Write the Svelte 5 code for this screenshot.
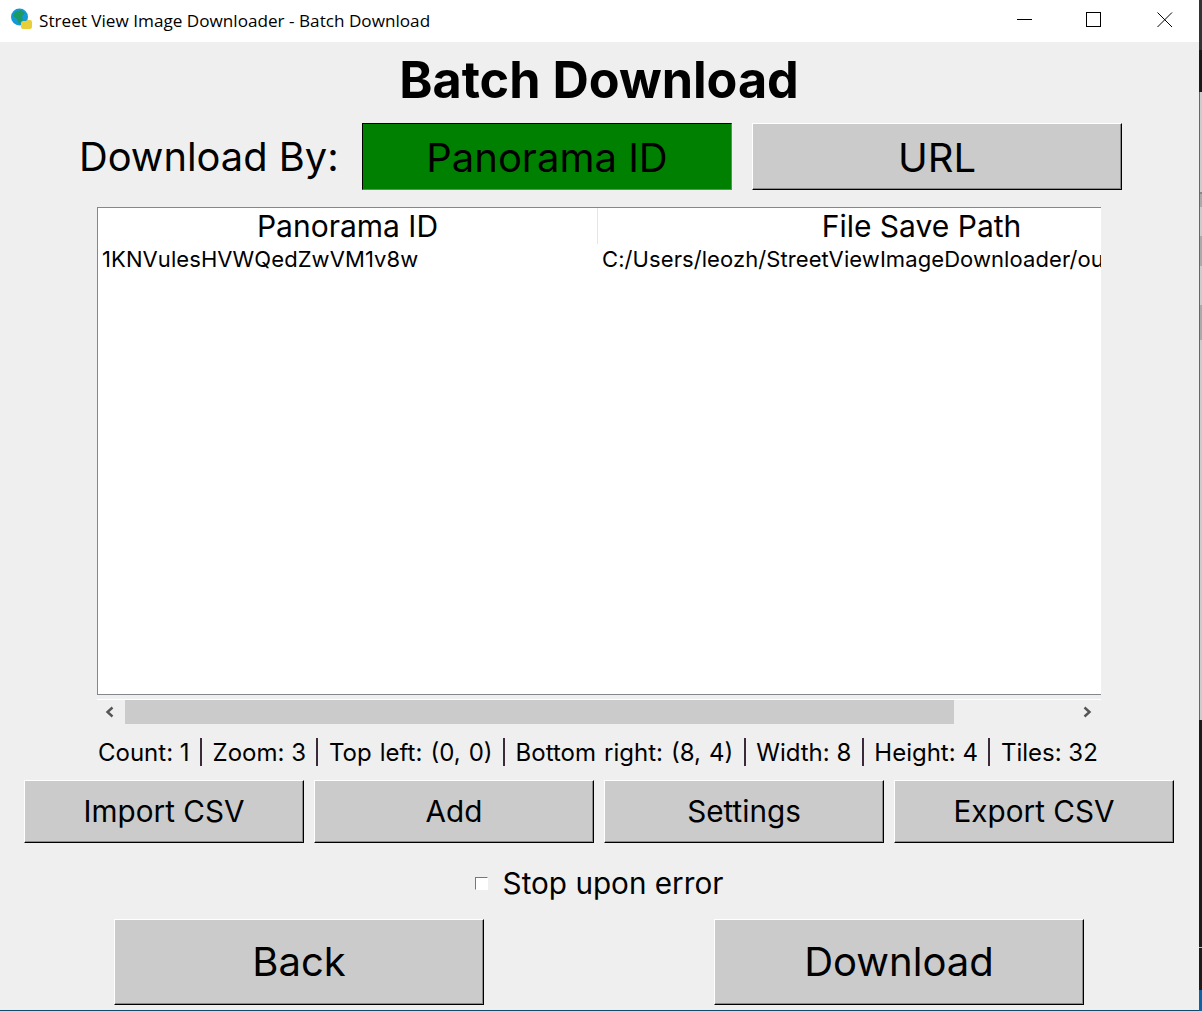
<script>
  let downloadBy = $state('id');
  let stopOnError = $state(false);

  const stats = [
    'Count: 1',
    'Zoom: 3',
    'Top left: (0, 0)',
    'Bottom right: (8, 4)',
    'Width: 8',
    'Height: 4',
    'Tiles: 32'
  ];
  const actions = ['Import CSV', 'Add', 'Settings', 'Export CSV'];
</script>

<div class="desktop">
  <div class="window">
    <header class="titlebar">
      <svg class="app-icon" width="24" height="24" viewBox="0 0 24 24">
        <circle cx="9.5" cy="9" r="8.5" fill="#1398d8" />
        <path d="M5 4 L11 2 L15 5 L12 8 L13 12 L9 16 L7 11 L3 8 Z" fill="#1c9a62" />
        <path d="M11 15 Q11 13 13 13 L16 13 L17 12 L20 12 Q22 12 22 14 L22 19 Q22 21 20 21 L13 21 Q11 21 11 19 Z" fill="#e8cf3a" />
      </svg>
      <span class="window-title">Street View Image Downloader - Batch Download</span>
      <div class="window-controls">
        <svg width="16" height="16" viewBox="0 0 16 16"><path d="M0 7.5 H15" stroke="#000" fill="none" /></svg>
        <svg width="16" height="16" viewBox="0 0 16 16"><rect x="0.5" y="0.5" width="14" height="14" stroke="#000" fill="none" /></svg>
        <svg class="close" width="16" height="16" viewBox="0 0 16 16"><path d="M0.5 0.5 L15 15 M15 0.5 L0.5 15" stroke="#000" fill="none" /></svg>
      </div>
    </header>

    <main class="content">
      <h1>Batch Download</h1>

      <div class="mode-row">
        <span class="mode-label">Download By:</span>
        <button class="btn mode" class:selected={downloadBy === 'id'} onclick={() => (downloadBy = 'id')}>Panorama ID</button>
        <button class="btn mode" class:selected={downloadBy === 'url'} onclick={() => (downloadBy = 'url')}>URL</button>
      </div>

      <div class="table">
        <div class="table-head">
          <div class="col-id head-cell">Panorama ID</div>
          <div class="col-path head-cell">File Save Path</div>
        </div>
        <div class="table-row">
          <div class="col-id">1KNVulesHVWQedZwVM1v8w</div>
          <div class="col-path">C:/Users/leozh/StreetViewImageDownloader/output/1KNVulesHVWQedZwVM1v8w.jpg</div>
        </div>
      </div>

      <div class="scrollbar">
        <svg width="12" height="12" viewBox="0 0 12 12"><path d="M8.5 1.5 L3.5 6 L8.5 10.5" stroke="#555" stroke-width="2.4" fill="none" /></svg>
        <div class="track"><div class="thumb"></div></div>
        <svg width="12" height="12" viewBox="0 0 12 12"><path d="M3.5 1.5 L8.5 6 L3.5 10.5" stroke="#555" stroke-width="2.4" fill="none" /></svg>
      </div>

      <div class="stats">
        {#each stats as stat, i}
          {#if i > 0}<span class="sep"></span>{/if}
          <span class:coords={stat.includes('(')}>{stat}</span>
        {/each}
      </div>

      <div class="actions">
        {#each actions as action}
          <button class="btn action">{action}</button>
        {/each}
      </div>

      <label class="stop-check">
        <input type="checkbox" bind:checked={stopOnError} />
        <span>Stop upon error</span>
      </label>

      <div class="footer-buttons">
        <button class="btn big">Back</button>
        <button class="btn big">Download</button>
      </div>
    </main>
  </div>
  <div class="edge"></div>
</div>

<style>
  :global(body) {
    margin: 0;
    background: #efefef;
  }
  .desktop {
    display: flex;
    width: 1202px;
    height: 1011px;
    overflow: hidden;
    font-family: Inter, "Liberation Sans", sans-serif;
    color: #000;
  }
  .window {
    width: 1199px;
    box-sizing: border-box;
    display: flex;
    flex-direction: column;
    background: #efefef;
    border-bottom: 1px solid #0f4a6e;
  }
  .edge {
    flex: 1;
    background:
      linear-gradient(#666, #666) 0 92px / 1px 628px no-repeat,
      linear-gradient(#333 0 50px, #1a1a1a 50px 92px, #ccc 92px 192px, #888 192px 194px, #aaa 194px 207px, #ccc 207px 236px, #aaa 236px 266px, #ccc 266px 305px, #aaa 305px 340px, #ccc 340px 720px, #1c1c1c 720px 947px, #bbb 947px 948px, #1c1c1c 948px 990px, #0a62a8 990px);
  }
  .titlebar {
    height: 42px;
    flex: none;
    background: #fff;
    display: flex;
    align-items: center;
    padding-left: 10px;
  }
  .app-icon {
    margin-top: -2px;
    margin-right: 5px;
  }
  .window-title {
    font-family: "Open Sans", sans-serif;
    font-size: 17.15px;
    margin-top: -2px;
  }
  .window-controls {
    margin-left: auto;
    display: flex;
    gap: 53px;
    padding-right: 26px;
    margin-top: -3px;
  }
  .window-controls svg {
    display: block;
  }
  .window-controls .close {
    margin-left: 2px;
  }
  .content {
    flex: 1;
    display: flex;
    flex-direction: column;
    padding: 0 25px 0 24px;
  }
  h1 {
    margin: 9px 0 0;
    text-align: center;
    font-size: 50.3px;
    line-height: 58px;
    font-weight: 700;
    height: 72px;
  }
  .btn {
    background: #cbcbcb;
    color: #000;
    font-family: inherit;
    padding: 0;
    border: 1px solid;
    border-color: #fff #000 #000 #fff;
    box-shadow: inset -1px -1px 0 #8a8a8a;
    border-radius: 0;
  }
  .mode-row {
    display: flex;
    align-items: center;
    height: 67px;
    padding-left: 55px;
  }
  .mode-label {
    font-size: 39.8px;
    width: 283px;
  }
  .mode {
    width: 370px;
    height: 67px;
    font-size: 40px;
    padding-top: 2px;
    margin-right: 20px;
  }
  .mode.selected {
    background: #008000;
    border-color: #000 #4aa04a #4aa04a #000;
    box-shadow: none;
  }
  .table {
    margin: 17px 0 0 73px;
    width: 1004px;
    height: 488px;
    box-sizing: border-box;
    background: #fff;
    border: 1px solid #828790;
    border-right: none;
    overflow: hidden;
  }
  .table-head,
  .table-row {
    display: flex;
    white-space: nowrap;
  }
  .table-head {
    height: 36px;
    font-size: 30px;
    line-height: 37px;
    text-align: center;
  }
  .table-row {
    font-size: 22px;
    letter-spacing: 0.08px;
    line-height: 30px;
    height: 30px;
  }
  .col-id {
    width: 500px;
    flex: none;
    box-sizing: border-box;
    padding-left: 4px;
  }
  .col-path {
    width: 647px;
    flex: none;
    box-sizing: border-box;
    padding-left: 4px;
  }
  .head-cell {
    padding-left: 0;
  }
  .head-cell.col-id {
    border-right: 1px solid #e5e5e5;
  }
  .scrollbar {
    margin: 4px 0 0 73px;
    width: 1004px;
    height: 24px;
    border-top: 1px solid #fff;
    display: flex;
    align-items: center;
  }
  .scrollbar svg {
    flex: none;
    margin: 0 7px 0 7px;
  }
  .scrollbar svg:last-child {
    margin: 0 8px 0 5px;
  }
  .track {
    flex: 1;
    height: 24px;
    padding-left: 2px;
  }
  .thumb {
    width: 829px;
    height: 24px;
    background: #cbcbcb;
  }
  .stats {
    margin: 13px 0 0 74px;
    height: 30px;
    display: flex;
    align-items: center;
    gap: 10.5px;
    font-size: 24px;
    white-space: nowrap;
  }
  .coords {
    word-spacing: 1.3px;
  }
  .sep {
    width: 2px;
    height: 28px;
    background: #3a2a3a;
  }
  .actions {
    margin-top: 13px;
    display: flex;
    gap: 10px;
  }
  .action {
    width: 280px;
    height: 63px;
    font-size: 29.7px;
    padding-bottom: 2px;
  }
  .stop-check {
    margin-top: 20px;
    height: 40px;
    display: flex;
    align-items: center;
    justify-content: center;
    gap: 15px;
    font-size: 29.7px;
    padding-left: 0;
  }
  .stop-check input {
    appearance: none;
    margin: 0;
    width: 13px;
    height: 13px;
    background: #fff;
    border: 1px solid;
    border-color: #777 #fff #fff #777;
  }
  .footer-buttons {
    margin-top: 16px;
    padding-left: 90px;
    display: flex;
    gap: 230px;
  }
  .big {
    width: 370px;
    height: 86px;
    font-size: 40px;
    padding-bottom: 2px;
  }
</style>
